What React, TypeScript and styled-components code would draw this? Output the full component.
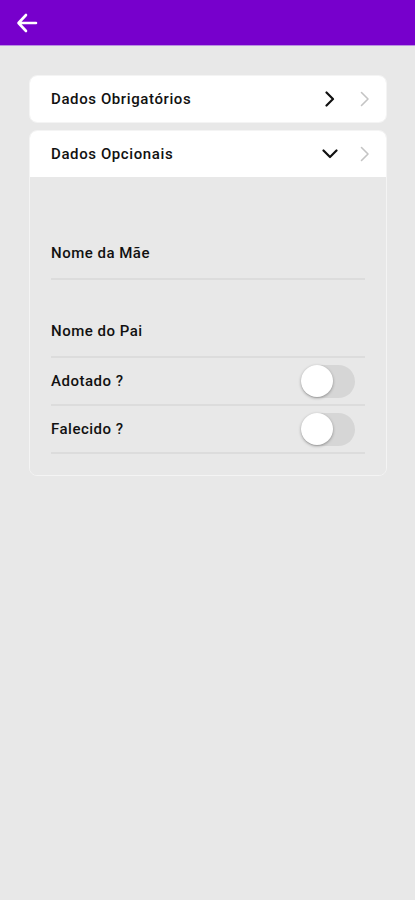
import React, { useState } from 'react'
import styled, { createGlobalStyle } from 'styled-components'

const Global = createGlobalStyle`
  html, body {
    margin: 0;
    padding: 0;
    background: #e8e8e8;
  }
  * { box-sizing: border-box; }
`

const Page = styled.div`
  min-height: 900px;
  background: #e8e8e8;
  font-family: 'Roboto', 'Liberation Sans', sans-serif;
  color: #111;
`

const TopBar = styled.header`
  height: 46px;
  background: #7700cc;
  display: flex;
  align-items: center;
  padding: 0 0 0 15px;
  border-bottom: 1px solid #b98fe0;
`

const BackButton = styled.button`
  background: none;
  border: none;
  padding: 0;
  width: 24px;
  height: 24px;
  display: flex;
  align-items: center;
  justify-content: center;
`

const Content = styled.main`
  display: flex;
  flex-direction: column;
  gap: 7px;
  padding: 29px 28px 0 29px;
`

const Card = styled.section`
  border-radius: 8px;
  overflow: hidden;
  border: 1px solid #f4f4f4;
`

const CardHeader = styled.div`
  height: 46px;
  background: #fff;
  display: flex;
  align-items: center;
  padding: 0 13px 0 21px;
`

const CardTitle = styled.span`
  flex: 1;
  font-size: 15px;
  font-weight: 500;
  letter-spacing: 0.6px;
`

const Icons = styled.div`
  display: flex;
  align-items: center;
  gap: 19px;
`

const CardBody = styled.div`
  background: #e8e8e8;
  padding: 44px 21px 21px 21px;
`

const Field = styled.div<{ $height: number }>`
  height: ${p => p.$height}px;
  display: flex;
  align-items: flex-end;
  padding-bottom: 16px;
  border-bottom: 2px solid #dcdcdc;
  font-size: 15px;
  font-weight: 500;
  letter-spacing: 0.5px;
`

const ToggleRow = styled.div`
  height: 48px;
  display: flex;
  align-items: center;
  justify-content: space-between;
  padding-right: 10px;
  border-bottom: 2px solid #dcdcdc;
  font-size: 15px;
  font-weight: 500;
  letter-spacing: 0.5px;
`

const Track = styled.button`
  width: 54px;
  height: 33px;
  border-radius: 17px;
  border: none;
  background: #d6d6d6;
  padding: 0;
  display: flex;
  align-items: center;
`

const Thumb = styled.span`
  width: 32px;
  height: 32px;
  border-radius: 50%;
  background: #fff;
  box-shadow: 0 1px 3px rgba(0, 0, 0, 0.35);
`

const Chevron: React.FC<{ dir: 'right' | 'down'; light?: boolean }> = ({ dir, light }) => (
  <svg width="16" height="16" viewBox="0 0 16 16" fill="none">
    <path
      d={dir === 'right' ? 'M4.5 1.5 L11 8 L4.5 14.5' : 'M1.5 4.5 L8 11 L14.5 4.5'}
      stroke={light ? '#c4c4c4' : '#111'}
      strokeWidth={light ? 1.6 : 2.2}
      strokeLinecap="round"
      strokeLinejoin="round"
    />
  </svg>
)

const Toggle: React.FC = () => (
  <Track>
    <Thumb />
  </Track>
)

const App: React.FC = () => {
  const [open] = useState(true)
  return (
    <Page>
      <Global />
      <TopBar>
        <BackButton>
          <svg width="24" height="24" viewBox="0 0 24 24" fill="none">
            <path d="M21 12 H4 M11 4 L3.5 12 L11 20" stroke="#fff" strokeWidth="2.6" strokeLinecap="round" strokeLinejoin="round" />
          </svg>
        </BackButton>
      </TopBar>
      <Content>
        <Card>
          <CardHeader>
            <CardTitle>Dados Obrigatórios</CardTitle>
            <Icons>
              <Chevron dir="right" />
              <Chevron dir="right" light />
            </Icons>
          </CardHeader>
        </Card>
        <Card>
          <CardHeader>
            <CardTitle>Dados Opcionais</CardTitle>
            <Icons>
              <Chevron dir={open ? 'down' : 'right'} />
              <Chevron dir="right" light />
            </Icons>
          </CardHeader>
          {open && (
            <CardBody>
              <Field $height={59}>Nome da Mãe</Field>
              <Field $height={78}>Nome do Pai</Field>
              <ToggleRow>
                Adotado ?
                <Toggle />
              </ToggleRow>
              <ToggleRow>
                Falecido ?
                <Toggle />
              </ToggleRow>
            </CardBody>
          )}
        </Card>
      </Content>
    </Page>
  )
}

export default App
